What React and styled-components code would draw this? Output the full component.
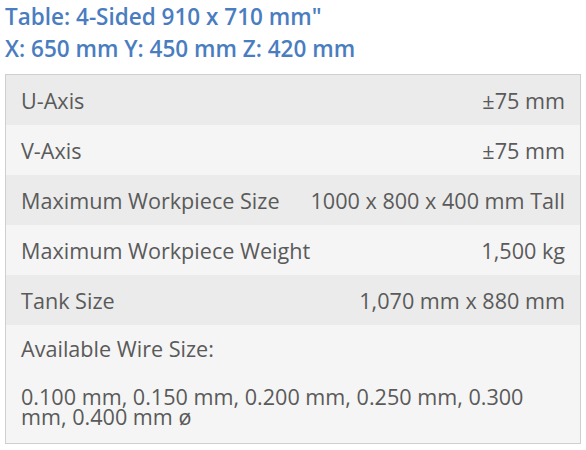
import React from "react";
import styled, { createGlobalStyle } from "styled-components";

const GlobalStyle = createGlobalStyle`
  body {
    margin: 0;
    background: #fff;
    font-family: "Open Sans", "Liberation Sans", sans-serif;
  }
`;

const specs = [
  { label: "U-Axis", value: "±75 mm" },
  { label: "V-Axis", value: "±75 mm" },
  { label: "Maximum Workpiece Size", value: "1000 x 800 x 400 mm Tall" },
  { label: "Maximum Workpiece Weight", value: "1,500 kg" },
  { label: "Tank Size", value: "1,070 mm x 880 mm" },
];

const App = () => {
  return (
    <>
      <GlobalStyle />
      <Wrap>
        <Heading>
          Table: 4-Sided 910 x 710 mm"
          <br />
          X: 650 mm Y: 450 mm Z: 420 mm
        </Heading>
        <SpecTable>
          {specs.map((s, i) => (
            <Row key={s.label} $odd={i % 2 === 0}>
              <span>{s.label}</span>
              <Value>{s.value}</Value>
            </Row>
          ))}
          <WireCell $odd={specs.length % 2 === 0}>
            <WireTitle>Available Wire Size:</WireTitle>
            <WireList>
              0.100 mm, 0.150 mm, 0.200 mm, 0.250 mm, 0.300 mm, 0.400 mm ø
            </WireList>
          </WireCell>
        </SpecTable>
      </Wrap>
    </>
  );
};

const Wrap = styled.div`
  padding: 0 5px;
  width: 576px;
`;

const Heading = styled.h3`
  margin: 0 0 9px;
  padding-top: 1px;
  color: #4a7dc0;
  font-size: 22.5px;
  font-weight: 600;
  line-height: 32px;
`;

const SpecTable = styled.div`
  border: 1px solid #cfcfcf;
  color: #5a5a5a;
  font-size: 21.6px;
`;

const Row = styled.div`
  display: flex;
  justify-content: space-between;
  align-items: center;
  height: 50px;
  padding: 0 15px;
  background: ${(p) => (p.$odd ? "#ebebeb" : "#f5f5f5")};
`;

const Value = styled.span`
  text-align: right;
`;

const WireCell = styled.div`
  padding: 11px 15px 16px;
  background: ${(p) => (p.$odd ? "#ebebeb" : "#f5f5f5")};
`;

const WireTitle = styled.div`
  line-height: 26px;
  margin-bottom: 25px;
`;

const WireList = styled.div`
  line-height: 20px;
`;

export default App;
